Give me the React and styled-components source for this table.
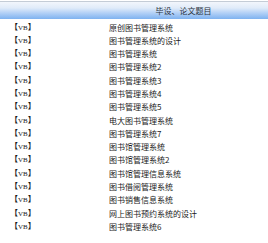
import React from "react";
import styled, { createGlobalStyle } from "styled-components";

const GlobalStyle = createGlobalStyle`
  body {
    margin: 0;
    background: #fff;
    font-family: "Liberation Serif", "Noto Sans CJK SC", serif;
  }
`;

const Table = styled.div`
  width: 268px;
  padding-top: 1px;
  display: grid;
  grid-template-columns: 100px 1fr;
`;

const HeadCell = styled.div`
  height: 17px;
  border-top: 1px solid #c4ccd6;
  background: linear-gradient(#f2f6fc 0%, #e0ebf9 35%, #b2d0f6 65%, #7eb2f0 100%);
  font-family: "Noto Sans CJK SC", sans-serif;
  font-size: 8px;
  line-height: 17px;
  color: #2a3340;
  text-align: center;
  padding-right: ${props => props.shift || "0px"};
`;

const Cell = styled.div`
  height: 13.3px;
  line-height: 13.3px;
  font-size: 8px;
  color: #1a1a1a;
  white-space: nowrap;
  padding-left: ${props => props.indent || "0px"};
  font-weight: ${props => (props.latin ? 700 : 400)};
  font-family: ${props =>
    props.latin
      ? '"Liberation Serif", "Noto Sans CJK SC", serif'
      : '"Noto Sans CJK SC", sans-serif'};
`;

const Small = styled.span`
  font-weight: 400;
  font-size: 7px;
`;

const Body = styled.div`
  grid-column: 1 / -1;
  display: grid;
  grid-template-columns: 100px 1fr;
  padding-top: 1.5px;
`;

const titles = [
  "原创图书管理系统",
  "图书管理系统的设计",
  "图书管理系统",
  "图书管理系统2",
  "图书管理系统3",
  "图书管理系统4",
  "图书管理系统5",
  "电大图书管理系统",
  "图书管理系统7",
  "图书馆管理系统",
  "图书馆管理系统2",
  "图书馆管理信息系统",
  "图书借阅管理系统",
  "图书销售信息系统",
  "网上图书预约系统的设计",
  "图书管理系统6",
];

export default function App() {
  return (
    <>
      <GlobalStyle />
      <Table>
        <HeadCell />
        <HeadCell shift="1px">毕设、论文题目</HeadCell>
        <Body>
          {titles.map((t, i) => (
            <React.Fragment key={i}>
              <Cell latin indent="10px">
                【<Small>VB</Small>】
              </Cell>
              <Cell indent="9px">{t}</Cell>
            </React.Fragment>
          ))}
        </Body>
      </Table>
    </>
  );
}
